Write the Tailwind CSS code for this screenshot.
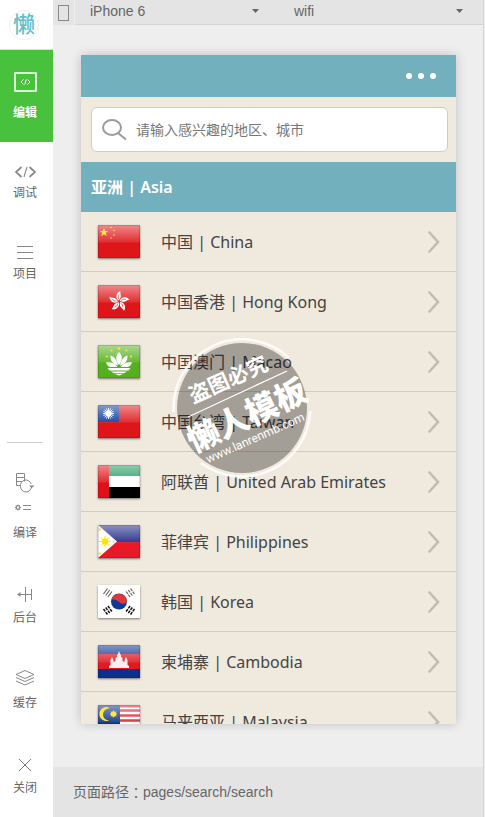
<!DOCTYPE html>
<html lang="zh-CN">

<head>
    <meta charset="UTF-8">
    <meta name="viewport" content="width=device-width, initial-scale=1.0">
    <title>pages/search/search</title>
    <script src="https://cdn.jsdelivr.net/npm/@tailwindcss/browser@4"></script>
</head>

<body class="flex h-screen overflow-hidden bg-[#eeeeee] font-['Liberation_Sans','Noto_Sans_CJK_SC',sans-serif] text-[#666666]">

    <!-- Shared gradient and chevron -->
    <svg class="absolute size-0" aria-hidden="true">
        <defs>
            <linearGradient id="gloss" x1="0" y1="0" x2="0" y2="1">
                <stop offset="0" stop-color="#fff" stop-opacity=".5" />
                <stop offset=".5" stop-color="#fff" stop-opacity=".12" />
                <stop offset=".56" stop-color="#fff" stop-opacity="0" />
            </linearGradient>
            <path id="chevron" d="M1.500 1.500L10 11l-8.500 9.500" fill="none" stroke="#c1bcb1" stroke-width="2.600" stroke-linecap="round" />
        </defs>
    </svg>

    <!-- Sidebar -->
    <nav class="flex w-[53px] shrink-0 flex-col bg-white text-xs leading-[18px]">
        <div class="flex h-[50px] shrink-0 items-center border-b border-[#dddddd] pl-[9px]">
            <div class="flex size-[30px] items-center justify-center rounded-full border border-[#eeeeee] text-[22px] leading-none font-medium text-[#62bdc9]">懒</div>
        </div>

        <button class="flex h-[92px] shrink-0 flex-col items-center gap-2.5 bg-[#48c23d] pt-5 pr-[3px] font-bold text-white">
            <svg class="size-6" viewBox="0 0 24 24" fill="none" stroke="#fff">
                <rect x="2" y="3" width="21" height="18" stroke-width="1.6" />
                <path d="M10.500 9.500L8 12l2.500 2.500M14.500 9.500L17 12l-2.500 2.500M13.200 9.500l-1.400 5" stroke-width="1" />
            </svg>
            编辑
        </button>

        <div class="mt-[18px] flex flex-col gap-[39px] pr-[3px]">
            <button class="flex flex-col items-center">
                <svg class="size-6" viewBox="0 0 24 24" fill="none" stroke="#888">
                    <path d="M8.500 7L3 12l5.500 5M16.500 7L22 12l-5.500 5" stroke-width="1.700" />
                    <path d="M14 7l-3 10" stroke-width="1.100" />
                </svg>
                调试
            </button>
            <button class="flex flex-col items-center">
                <svg class="size-6" viewBox="0 0 24 24" stroke="#888">
                    <path d="M4 5.500h16M4 11.500h16M4 17.500h16" />
                </svg>
                项目
            </button>
        </div>

        <hr class="mt-auto mr-2.5 mb-[29px] ml-[7px] border-[#cccccc]">

        <div class="flex flex-col gap-10 pr-[3px] pb-5">
            <button class="flex flex-col items-center gap-2.5">
                <svg class="h-[42px] w-6" viewBox="0 0 24 42" fill="none" stroke="#888">
                    <path d="M7 13.500H3.500v-12h8v8M3.500 5.500h8M3.500 9.500h6" />
                    <path d="M18.200 12a5.500 5.500 0 0 0-10.700 2.500 5.500 5.500 0 0 0 11 0v-.5" />
                    <path d="M16 13.500h5.500l-2.700 2.500z" fill="#888" stroke="none" />
                    <circle cx="5" cy="35.500" r="1.800" stroke-width="1.300" />
                    <path d="M5 32.500v1M5 37.500v1M2 35.500h1M7 35.500h1M3 33.500l.7.700M7 33.500l-.7.700M3 37.500l.7-.7M7 37.500l-.7-.7M10 33.500h8M10 37.500h8" />
                </svg>
                编译
            </button>
            <button class="flex flex-col items-center gap-[3px]">
                <svg class="size-6" viewBox="0 0 24 24" fill="none" stroke="#888">
                    <path d="M12.500 5v15M18.500 7v11M12.500 12.500h6M5 12.500h7" />
                    <path d="M4 12.500l3.500-2.500v5z" fill="#888" stroke="none" />
                </svg>
                后台
            </button>
            <button class="flex flex-col items-center gap-[3px]">
                <svg class="size-6" viewBox="0 0 24 24" fill="none" stroke="#888">
                    <path d="M12 3.500L21 7.500l-9 4-9-4z" />
                    <path d="M3 10.500l9 4 9-4M3 14l9 4 9-4" />
                </svg>
                缓存
            </button>
            <button class="flex flex-col items-center gap-[3px]">
                <svg class="size-6" viewBox="0 0 24 24" stroke="#777">
                    <path d="M6 7l12 12M18 7L6 19" />
                </svg>
                关闭
            </button>
        </div>
    </nav>

    <!-- Simulator -->
    <main class="mr-px flex min-w-0 flex-1 flex-col border-r border-[#d4d4d4]">
        <div class="flex h-[25px] shrink-0 bg-[#e4e4e4] text-sm">
            <button class="flex w-[22px] items-center justify-center border-r border-[#eeeeee]" aria-label="旋转">
                <svg class="h-4 w-3" viewBox="0 0 12 16" fill="none" stroke="#888">
                    <rect x=".5" y=".5" width="10" height="15" />
                </svg>
            </button>
            <div class="relative flex-1 border-b border-[#d4d4d4]">
                <select class="h-[22px] w-full appearance-none bg-transparent pl-[15px]" aria-label="设备">
                    <option>iPhone 6</option>
                </select>
                <svg class="pointer-events-none absolute top-[9px] right-5 h-1 w-[7px]" viewBox="0 0 7 4" fill="#666">
                    <path d="M0 0h7L3.500 4z" />
                </svg>
            </div>
            <div class="relative flex-1 border-b border-[#d4d4d4]">
                <select class="h-[22px] w-full appearance-none bg-transparent pl-[15px]" aria-label="网络">
                    <option>wifi</option>
                </select>
                <svg class="pointer-events-none absolute top-[9px] right-5 h-1 w-[7px]" viewBox="0 0 7 4" fill="#666">
                    <path d="M0 0h7L3.500 4z" />
                </svg>
            </div>
        </div>

        <!-- Phone -->
        <div class="relative mt-[30px] mr-[27px] mb-[43px] ml-7 flex min-h-0 flex-1 flex-col overflow-hidden bg-[#f0e9de] font-['Noto_Sans','Noto_Sans_CJK_SC',sans-serif] shadow-[0_0_10px_rgba(0,0,0,0.2)]">
            <header class="flex h-[42px] shrink-0 items-center justify-end bg-[#72b0be] pr-5">
                <button aria-label="更多">
                    <svg class="h-1.5 w-[30px]" viewBox="0 0 30 6" fill="#fff">
                        <circle cx="3" cy="3" r="3" />
                        <circle cx="15" cy="3" r="3" />
                        <circle cx="27" cy="3" r="3" />
                    </svg>
                </button>
            </header>

            <label class="mt-2.5 mr-2 mb-2.5 ml-2.5 flex h-[45px] shrink-0 items-center gap-2 rounded-md border border-[#cccccc] bg-white pl-2.5">
                <svg class="h-[22px] w-[26px]" viewBox="0 0 26 22" fill="none" stroke="#999b9e" stroke-width="2">
                    <ellipse cx="10" cy="8.500" rx="9" ry="7.500" />
                    <path d="M16 14l8 6.500" />
                </svg>
                <input type="text" placeholder="请输入感兴趣的地区、城市" aria-label="搜索"
                    class="min-w-0 flex-1 text-sm outline-none placeholder:text-[#777777]">
            </label>

            <h2 class="flex h-[50px] shrink-0 items-center bg-[#72b0be] pl-2.5 text-base font-semibold text-white">亚洲 | Asia</h2>

            <ul class="min-h-0 flex-1 overflow-hidden text-base text-[#444444]">
                <li>
                    <a href="#" class="flex h-[60px] items-center border-b border-[#cccccc] pr-4 pl-[17px]">
                        <svg class="mr-[21px] h-[33px] w-[42px] shadow-[0_1px_2px_rgba(0,0,0,0.5)]" viewBox="0 0 42 33">
                            <path fill="#de1519" d="M0 0h42v33H0z" />
                            <path fill="url(#gloss)" d="M0 0h42v33H0z" />
                            <g fill="#ffe94a">
                                <path d="M6 3l1.100 3h3L7.700 8l1 3L6 9.200 3.300 11l1-3L1.900 6h3z" />
                                <circle cx="13" cy="2.500" r=".8" />
                                <circle cx="16" cy="5.500" r=".8" />
                                <circle cx="16" cy="10" r=".8" />
                                <circle cx="13" cy="13" r=".8" />
                            </g>
                            <path fill="none" stroke="#0002" d="M.5.5h41v32H.5z" />
                        </svg>
                        <span class="flex-1">中国 | China</span>
                        <svg class="h-[22px] w-3" viewBox="0 0 12 22"><use href="#chevron" /></svg>
                    </a>
                </li>
                <li>
                    <a href="#" class="flex h-[60px] items-center border-b border-[#cccccc] pr-4 pl-[17px]">
                        <svg class="mr-[21px] h-[33px] w-[42px] shadow-[0_1px_2px_rgba(0,0,0,0.5)]" viewBox="0 0 42 33">
                            <path fill="#de1519" d="M0 0h42v33H0z" />
                            <path fill="url(#gloss)" d="M0 0h42v33H0z" />
                            <g fill="#fff">
                                <g id="petal">
                                    <path d="M20.500 15.500c-3.500-2.500-2.500-8 2-9.500-1 3 2.500 5.500-2 9.500z" />
                                    <path d="M20.800 14c-1-1.500-.6-3 .4-4.500" fill="none" stroke="#e0363a" stroke-width=".7" />
                                </g>
                                <use href="#petal" transform="rotate(72 21 16.500)" />
                                <use href="#petal" transform="rotate(144 21 16.500)" />
                                <use href="#petal" transform="rotate(216 21 16.500)" />
                                <use href="#petal" transform="rotate(288 21 16.500)" />
                            </g>
                            <path fill="none" stroke="#0002" d="M.5.5h41v32H.5z" />
                        </svg>
                        <span class="flex-1">中国香港 | Hong Kong</span>
                        <svg class="h-[22px] w-3" viewBox="0 0 12 22"><use href="#chevron" /></svg>
                    </a>
                </li>
                <li>
                    <a href="#" class="flex h-[60px] items-center border-b border-[#cccccc] pr-4 pl-[17px]">
                        <svg class="mr-[21px] h-[33px] w-[42px] shadow-[0_1px_2px_rgba(0,0,0,0.5)]" viewBox="0 0 42 33">
                            <path fill="#55b01f" d="M0 0h42v33H0z" />
                            <path fill="url(#gloss)" d="M0 0h42v33H0z" />
                            <g fill="#fff">
                                <path d="M21 7c4 4 3.500 9 0 13-3.500-4-4-9 0-13z" />
                                <path d="M12.500 10.500c4 1 6.500 5 7.500 10-5-1-8-5-7.500-10zM29.500 10.500c-4 1-6.500 5-7.500 10 5-1 8-5 7.500-10z" />
                                <path d="M8 17.500c5-1 9 1 11.500 4.500H12c-2-1-3.500-2.500-4-4.500zM34 17.500c-5-1-9 1-11.500 4.500H30c2-1 3.500-2.500 4-4.500z" />
                                <path d="M9.500 23h23l-2 2.500h-19zM13 26.500h16l-3 1.700H16zM17 29h8l-4 1.500z" />
                            </g>
                            <g fill="#ffe23c">
                                <circle cx="21" cy="3.500" r="1.300" />
                                <circle cx="13.500" cy="5.500" r="1.100" />
                                <circle cx="28.500" cy="5.500" r="1.100" />
                                <circle cx="9" cy="11.500" r="1.100" />
                                <circle cx="33" cy="11.500" r="1.100" />
                            </g>
                            <path fill="none" stroke="#0002" d="M.5.5h41v32H.5z" />
                        </svg>
                        <span class="flex-1">中国澳门 | Macao</span>
                        <svg class="h-[22px] w-3" viewBox="0 0 12 22"><use href="#chevron" /></svg>
                    </a>
                </li>
                <li>
                    <a href="#" class="flex h-[60px] items-center border-b border-[#cccccc] pr-4 pl-[17px]">
                        <svg class="mr-[21px] h-[33px] w-[42px] shadow-[0_1px_2px_rgba(0,0,0,0.5)]" viewBox="0 0 42 33">
                            <path fill="#de1519" d="M0 0h42v33H0z" />
                            <path fill="#0b3a9a" d="M0 0h21v17H0z" />
                            <path fill="url(#gloss)" d="M0 0h42v33H0z" />
                            <circle cx="10.500" cy="8.500" r="3" fill="#fff" />
                            <path stroke="#fff" stroke-width=".9" d="M10.500 3v11M5 8.500h11M6.600 4.600l7.800 7.800M14.400 4.600l-7.800 7.800M8.400 3.400l4.200 10.200M12.600 3.400L8.400 13.600M5.400 6.400l10.200 4.200M15.600 6.400L5.400 10.600" />
                            <path fill="none" stroke="#0002" d="M.5.5h41v32H.5z" />
                        </svg>
                        <span class="flex-1">中国台湾 | Taiwan</span>
                        <svg class="h-[22px] w-3" viewBox="0 0 12 22"><use href="#chevron" /></svg>
                    </a>
                </li>
                <li>
                    <a href="#" class="flex h-[60px] items-center border-b border-[#cccccc] pr-4 pl-[17px]">
                        <svg class="mr-[21px] h-[33px] w-[42px] shadow-[0_1px_2px_rgba(0,0,0,0.5)]" viewBox="0 0 42 33">
                            <path fill="#fff" d="M0 0h42v33H0z" />
                            <path fill="#1c9a5e" d="M11 0h31v11H11z" />
                            <path fill="#000" d="M11 22h31v11H11z" />
                            <path fill="#e01018" d="M0 0h11v33H0z" />
                            <path fill="url(#gloss)" d="M0 0h42v33H0z" />
                            <path fill="none" stroke="#0002" d="M.5.5h41v32H.5z" />
                        </svg>
                        <span class="flex-1">阿联酋 | United Arab Emirates</span>
                        <svg class="h-[22px] w-3" viewBox="0 0 12 22"><use href="#chevron" /></svg>
                    </a>
                </li>
                <li>
                    <a href="#" class="flex h-[60px] items-center border-b border-[#cccccc] pr-4 pl-[17px]">
                        <svg class="mr-[21px] h-[33px] w-[42px] shadow-[0_1px_2px_rgba(0,0,0,0.5)]" viewBox="0 0 42 33">
                            <path fill="#1c2384" d="M0 0h42v17H0z" />
                            <path fill="#e81a28" d="M0 17h42v16H0z" />
                            <path fill="url(#gloss)" d="M0 0h42v33H0z" />
                            <path fill="#fff" d="M0 0l19 16.500L0 33z" />
                            <circle cx="7" cy="16.500" r="3.200" fill="#ffe600" />
                            <path stroke="#ffe600" d="M7 10.500v12M1 16.500h12M2.800 12.300l8.400 8.400M11.200 12.300l-8.400 8.400" />
                            <g fill="#ffe600">
                                <circle cx="1.800" cy="4.500" r="1.200" />
                                <circle cx="1.800" cy="28.500" r="1.200" />
                                <circle cx="15.500" cy="16.500" r="1" />
                            </g>
                            <path fill="none" stroke="#0002" d="M.5.5h41v32H.5z" />
                        </svg>
                        <span class="flex-1">菲律宾 | Philippines</span>
                        <svg class="h-[22px] w-3" viewBox="0 0 12 22"><use href="#chevron" /></svg>
                    </a>
                </li>
                <li>
                    <a href="#" class="flex h-[60px] items-center border-b border-[#cccccc] pr-4 pl-[17px]">
                        <svg class="mr-[21px] h-[33px] w-[42px] shadow-[0_1px_2px_rgba(0,0,0,0.5)]" viewBox="0 0 42 33">
                            <path fill="#fff" d="M0 0h42v33H0z" />
                            <circle cx="21" cy="16.500" r="8" fill="#0e3a94" />
                            <path fill="#e0363c" d="M13.500 14.500A8 8 0 0 1 29 16c-.5 3-5 4-8 1s-7-2-7.500-2.500z" />
                            <g stroke="#666" stroke-width="1.200">
                                <path d="M5.500 9l4-5.500M7.700 10.500l4-5.500M9.900 12l4-5.500" />
                                <path d="M36.500 9l-4-5.500M34.300 10.500l-4-5.500M32.100 12l-4-5.500" stroke-dasharray="3 .8" />
                            </g>
                            <g stroke="#111" stroke-width="1.500">
                                <path d="M5.500 24l4 5.500M7.700 22.500l4 5.500M9.900 21l4 5.500" stroke-dasharray="3 .8" />
                                <path d="M36.500 24l-4 5.500M34.300 22.500l-4 5.500M32.100 21l-4 5.500" stroke-dasharray="3 .8" />
                            </g>
                        </svg>
                        <span class="flex-1">韩国 | Korea</span>
                        <svg class="h-[22px] w-3" viewBox="0 0 12 22"><use href="#chevron" /></svg>
                    </a>
                </li>
                <li>
                    <a href="#" class="flex h-[60px] items-center border-b border-[#cccccc] pr-4 pl-[17px]">
                        <svg class="mr-[21px] h-[33px] w-[42px] shadow-[0_1px_2px_rgba(0,0,0,0.5)]" viewBox="0 0 42 33">
                            <path fill="#0a2f8c" d="M0 0h42v33H0z" />
                            <path fill="#e01a22" d="M0 9h42v15H0z" />
                            <path fill="url(#gloss)" d="M0 0h42v33H0z" />
                            <path fill="#fff" fill-opacity=".92" d="M11 23v-2l1.500-1v-5l1.500-3 1.500 3v2l2-1v-3l1.500-1v-2l1-1 1-3 1 3 1 1v2l1.500 1v3l2 1v-2l1.500-3 1.500 3v5l1.500 1v2z" />
                            <path fill="none" stroke="#0002" d="M.5.5h41v32H.5z" />
                        </svg>
                        <span class="flex-1">柬埔寨 | Cambodia</span>
                        <svg class="h-[22px] w-3" viewBox="0 0 12 22"><use href="#chevron" /></svg>
                    </a>
                </li>
                <li>
                    <a href="#" class="flex h-[60px] items-center border-b border-[#cccccc] pr-4 pl-[17px]">
                        <svg class="mr-[21px] h-[33px] w-[42px] shadow-[0_1px_2px_rgba(0,0,0,0.5)]" viewBox="0 0 42 33">
                            <path fill="#fff" d="M0 0h42v33H0z" />
                            <path stroke="#dc1c24" stroke-width="2.500" d="M0 1.200h42M0 5.500h42M0 10.500h42M0 15.500h42M0 20.500h42M0 25.500h42M0 30.500h42" />
                            <path fill="#0b2f86" d="M0 0h22v19H0z" />
                            <path fill="url(#gloss)" d="M0 0h42v33H0z" />
                            <path fill="#ffe83c" d="M11 3.500a6 6 0 1 0 0 12A7 7 0 1 1 11 2.500z" />
                            <circle cx="15.500" cy="9" r="2.800" fill="#ffe83c" />
                            <path stroke="#ffe83c" stroke-width=".8" d="M15.500 5.500v7M12 9h7M13 6.500l5 5M18 6.500l-5 5" />
                            <path fill="none" stroke="#0002" d="M.5.5h41v32H.5z" />
                        </svg>
                        <span class="flex-1">马来西亚 | Malaysia</span>
                        <svg class="h-[22px] w-3" viewBox="0 0 12 22"><use href="#chevron" /></svg>
                    </a>
                </li>
            </ul>

            <!-- Watermark -->
            <svg class="pointer-events-none absolute top-[283px] left-[91px] size-[140px] overflow-visible font-['Noto_Sans_CJK_SC',sans-serif]" viewBox="0 0 140 140">
                <circle cx="70" cy="70" r="65" fill="#000" fill-opacity=".32" />
                <g fill="none" stroke="#fff" stroke-opacity=".85" stroke-width="2.500">
                    <path d="M1.700 74A68.500 68.500 0 0 1 117 20" />
                    <path d="M29 125A68.500 68.500 0 0 0 138.300 73" />
                </g>
                <path stroke="#fff" stroke-width="1.300" d="M16 79l99-46" />
                <g fill="#fff" text-anchor="middle">
                    <text x="56" y="49" font-size="21" font-weight="700" transform="rotate(-24 56 41)">盗图必究</text>
                    <text x="75" y="89" font-size="32" font-weight="900" transform="rotate(-25 75 77)">懒人模板</text>
                    <text x="83" y="104" font-size="12" font-family="Roboto" transform="rotate(-24 83 100)">www.lanrenmb.com</text>
                </g>
            </svg>
        </div>

        <footer class="flex h-[50px] shrink-0 items-center bg-[#e4e4e4] pl-5 text-sm">页面路径<span lang="zh-TW" class="font-['Noto_Sans_CJK_TC',sans-serif]">：</span>pages/search/search</footer>
    </main>
</body>

</html>
